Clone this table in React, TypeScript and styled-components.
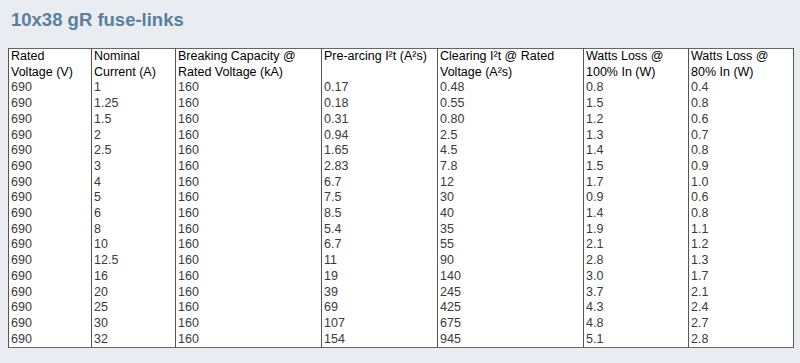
import React from "react";
import styled, { createGlobalStyle } from "styled-components";

const Global = createGlobalStyle`
  html, body { margin: 0; padding: 0; background: #e9edf2; }
  body { font-family: "Liberation Sans", Arial, sans-serif; }
`;

const Page = styled.div`
  min-height: 363px;
  background: #e9edf2;
  padding: 9px 0 0 0;
  box-sizing: border-box;
`;

const Title = styled.h1`
  margin: 0 0 18px 11px;
  font-family: "Liberation Sans", Arial, sans-serif;
  font-size: 18.5px;
  line-height: 21px;
  font-weight: bold;
  color: #5b7f9d;
`;

const Table = styled.table`
  margin-left: 8px;
  width: 785px;
  table-layout: fixed;
  border-collapse: collapse;
  background: #ffffff;
  border: 1px solid #666;
  font-family: "Liberation Sans", Arial, sans-serif;
  font-size: 12.5px;
  line-height: 15.7px;
`;

const Th = styled.th`
  font-weight: normal;
  text-align: left;
  vertical-align: top;
  color: #000;
  padding: 0 2px;
  border-left: 1px solid #555;
  border-right: 1px solid #555;
`;

const Td = styled.td`
  text-align: left;
  vertical-align: top;
  color: #3a3a3a;
  padding: 0 2px;
  border-left: 1px solid #555;
  border-right: 1px solid #555;
  white-space: nowrap;
`;

const widths = [83, 84, 146, 116, 146, 105, 105];

const headers = [
  "Rated Voltage (V)",
  "Nominal Current (A)",
  "Breaking Capacity @ Rated Voltage (kA)",
  "Pre-arcing I²t (A²s)",
  "Clearing I²t @ Rated Voltage (A²s)",
  "Watts Loss @ 100% In (W)",
  "Watts Loss @ 80% In (W)",
];

const rows: string[][] = [
  ["690", "1", "160", "0.17", "0.48", "0.8", "0.4"],
  ["690", "1.25", "160", "0.18", "0.55", "1.5", "0.8"],
  ["690", "1.5", "160", "0.31", "0.80", "1.2", "0.6"],
  ["690", "2", "160", "0.94", "2.5", "1.3", "0.7"],
  ["690", "2.5", "160", "1.65", "4.5", "1.4", "0.8"],
  ["690", "3", "160", "2.83", "7.8", "1.5", "0.9"],
  ["690", "4", "160", "6.7", "12", "1.7", "1.0"],
  ["690", "5", "160", "7.5", "30", "0.9", "0.6"],
  ["690", "6", "160", "8.5", "40", "1.4", "0.8"],
  ["690", "8", "160", "5.4", "35", "1.9", "1.1"],
  ["690", "10", "160", "6.7", "55", "2.1", "1.2"],
  ["690", "12.5", "160", "11", "90", "2.8", "1.3"],
  ["690", "16", "160", "19", "140", "3.0", "1.7"],
  ["690", "20", "160", "39", "245", "3.7", "2.1"],
  ["690", "25", "160", "69", "425", "4.3", "2.4"],
  ["690", "30", "160", "107", "675", "4.8", "2.7"],
  ["690", "32", "160", "154", "945", "5.1", "2.8"],
];

export default function App() {
  return (
    <>
      <Global />
      <Page>
        <Title>10x38 gR fuse-links</Title>
        <Table>
          <colgroup>
            {widths.map((w, i) => (
              <col key={i} style={{ width: w }} />
            ))}
          </colgroup>
          <thead>
            <tr>
              {headers.map((h) => (
                <Th key={h}>{h}</Th>
              ))}
            </tr>
          </thead>
          <tbody>
            {rows.map((r, i) => (
              <tr key={i}>
                {r.map((c, j) => (
                  <Td key={j}>{c}</Td>
                ))}
              </tr>
            ))}
          </tbody>
        </Table>
      </Page>
    </>
  );
}
